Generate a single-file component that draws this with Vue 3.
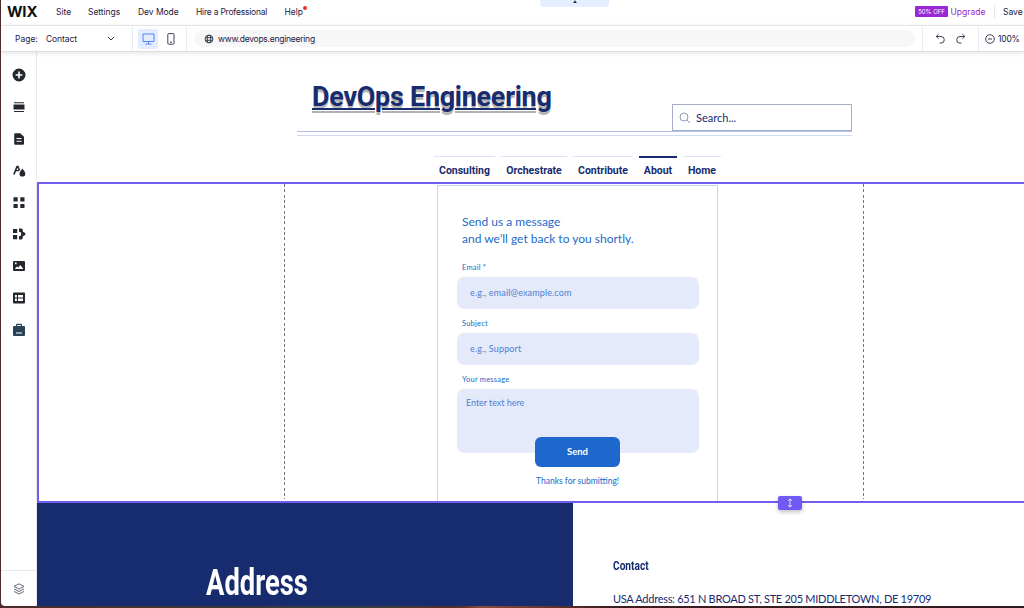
<template>
  <div class="desktop">
    <div class="window">
      <header class="menu-bar">
        <span class="brand">WIX</span>
        <nav class="menu">
          <a v-for="item in menu" :key="item.label" :class="item.key">{{ item.label }}</a>
        </nav>
        <div class="handle">
          <svg width="6" height="4" viewBox="0 0 6 4"><path d="M3 0.2 5 3H1z" /></svg>
        </div>
        <div class="plan">
          <span class="badge">50% OFF</span>
          <span class="upgrade">Upgrade</span>
        </div>
        <div class="save">Save</div>
      </header>

      <div class="tool-bar">
        <div class="page-select">
          <span class="page-label">Page:</span>
          <span class="page-name">Contact</span>
          <svg width="8" height="5" viewBox="0 0 8 5"><path d="M1 1l3 3 3-3" /></svg>
        </div>
        <div class="devices">
          <div class="device active">
            <svg width="13" height="12" viewBox="0 0 13 12">
              <path d="M1 1h11v7.5H1zM6.5 8.5v2.3M3.5 11h6" />
            </svg>
          </div>
          <div class="device">
            <svg width="8" height="12" viewBox="0 0 8 12">
              <rect x="0.8" y="0.6" width="6.2" height="10.6" rx="0.9" />
              <path d="M3 9.2h2" />
            </svg>
          </div>
        </div>
        <div class="address-wrap">
          <div class="address">
            <svg width="10" height="10" viewBox="0 0 10 10">
              <circle cx="5" cy="5" r="3.9" />
              <ellipse cx="5" cy="5" rx="1.8" ry="3.9" />
              <path d="M1.4 3.7h7.2M1.4 6.3h7.2" />
            </svg>
            <span>www.devops.engineering</span>
          </div>
        </div>
        <div class="history">
          <svg width="11" height="11" viewBox="0 0 11 11">
            <path d="M3.6 1.2 1.2 3.5l2.4 2.3M1.4 3.5H6a3.3 3.3 0 0 1 0 6.6H4.6" />
          </svg>
          <svg width="11" height="11" viewBox="0 0 11 11">
            <path d="M7.4 1.2l2.4 2.3-2.4 2.3M9.6 3.5H5a3.3 3.3 0 0 0 0 6.6h1.4" />
          </svg>
        </div>
        <div class="zoom">
          <svg width="10" height="10" viewBox="0 0 10 10">
            <circle cx="5" cy="5" r="4.3" />
            <path d="M3 5h4" />
          </svg>
          <span>100%</span>
        </div>
      </div>

      <div class="workspace">
        <aside class="side-bar">
          <div class="side-icons">
            <svg v-for="icon in sideIcons" :key="icon.name" :class="icon.name" width="14" height="14" viewBox="0 0 14 14">
              <path fill-rule="evenodd" :d="icon.path" />
            </svg>
          </div>
          <div class="layers">
            <svg width="12" height="12" viewBox="0 0 12 12">
              <path d="M6 .8 11 3.4 6 6 1 3.4zM1 5.9l5 2.6 5-2.6M1 8.4 6 11l5-2.6" />
            </svg>
          </div>
        </aside>

        <main class="canvas">
          <section class="site-header">
            <div class="title-row">
              <h1>DevOps Engineering</h1>
              <div class="search">
                <svg width="12" height="12" viewBox="0 0 12 12">
                  <circle cx="5" cy="5" r="4" />
                  <path d="M8 8l3 3" />
                </svg>
                <span>Search...</span>
              </div>
            </div>
            <div class="double-line"></div>
            <nav class="site-nav">
              <a v-for="link in links" :key="link.label" :class="[link.key, { current: link.current }]">
                {{ link.label }}
              </a>
            </nav>
          </section>

          <section class="selected">
            <div class="guide"></div>
            <form class="contact-form">
              <p class="intro">Send us a message<br />and we’ll get back to you shortly.</p>
              <label>Email *</label>
              <div class="field">e.g., email@example.com</div>
              <label>Subject</label>
              <div class="field">e.g., Support</div>
              <label>Your message</label>
              <div class="field area">Enter text here</div>
              <button type="button">Send</button>
              <p class="thanks">Thanks for submitting!</p>
            </form>
            <div class="guide"></div>
            <div class="resize">
              <svg width="8" height="10" viewBox="0 0 8 10">
                <path d="M4 1v8M2 2.8 4 .9l2 1.9M2 7.2l2 1.9 2-1.9" />
              </svg>
            </div>
          </section>

          <section class="site-footer">
            <div class="footer-left"><h2>Address</h2></div>
            <div class="footer-right">
              <h3>Contact</h3>
              <p>USA Address: 651 N BROAD ST, STE 205 MIDDLETOWN, DE 19709</p>
            </div>
          </section>
        </main>
      </div>
    </div>
  </div>
</template>

<script setup>
const menu = [
  { key: 'site', label: 'Site' },
  { key: 'settings', label: 'Settings' },
  { key: 'dev', label: 'Dev Mode' },
  { key: 'hire', label: 'Hire a Professional' },
  { key: 'help', label: 'Help' },
]

const links = [
  { key: 'consulting', label: 'Consulting' },
  { key: 'orchestrate', label: 'Orchestrate' },
  { key: 'contribute', label: 'Contribute' },
  { key: 'about', label: 'About', current: true },
  { key: 'home', label: 'Home' },
]

const sideIcons = [
  { name: 'add', path: 'M7 .5a6.5 6.5 0 1 1 0 13a6.5 6.5 0 0 1 0-13zM6.2 3.6v2.6H3.6v1.6h2.6v2.6h1.6V7.8h2.6V6.2H7.8V3.6z' },
  { name: 'sections', path: 'M1.5 4.6h11v5h-11zM2 2.3h10v1H2zM2 10.9h10v1H2z' },
  { name: 'pages', path: 'M3.2 1.2h5l3.8 3.6v7a1 1 0 0 1-1 1H3.2a1 1 0 0 1-1-1V2.200a1 1 0 0 1 1-1zM4.500 5.900v1h5v-1zM4.500 8.800v1h5v-1z' },
  { name: 'design', path: 'M1 10.500 4.500 1.800h2l1.500 3.900-1 1.600H4.100L2.800 10.500zM5.500 3.600 4.600 5.900h1.800zM10.400 4.400c1.500 2.200 2.900 3.700 2.900 5.300a2.900 2.900 0 0 1-5.800 0c0-1.600 1.400-3.100 2.900-5.300z' },
  { name: 'apps', path: 'M1.5 1.3h4.200v4.200H1.500zM8.300 1.300h4.200v4.200H8.300zM1.500 7.900h4.200v4.200H1.500zM8.300 7.900h4.200v4.200H8.300z' },
  { name: 'business', path: 'M1 1.900h4.200v4.200H1zM1 8h4.200v4.200H1zM7 1.500h2.600l1.200 1.100-.2 1.300.8 1.200 1.900.8v2.200l-1.900.8-.8 1.200.2 1.300-1.200 1.100H7V9.300a2.300 2.300 0 0 0 0-4.600z' },
  { name: 'media', path: 'M2 2h10a1 1 0 0 1 1 1v8a1 1 0 0 1-1 1H2a1 1 0 0 1-1-1V3a1 1 0 0 1 1-1zM2.800 10h8.600L8.300 6 6.200 8.500 4.900 7.500zM3 3.600v1.600h1.600V3.600z' },
  { name: 'content', path: 'M2 1.500h10a1 1 0 0 1 1 1v9a1 1 0 0 1-1 1H2a1 1 0 0 1-1-1v-9a1 1 0 0 1 1-1zM3 4v2.400h1.900V4zM6 4v2.400h5V4zM3 7.500v2.400h1.900V7.500zM6 7.500v2.400h5V7.500z' },
  { name: 'store', path: 'M4 3V1.800a1 1 0 0 1 1-1h4a1 1 0 0 1 1 1V3h2a1 1 0 0 1 1 1v8a1 1 0 0 1-1 1H2a1 1 0 0 1-1-1V4a1 1 0 0 1 1-1zM5.200 3h3.600V2H5.200zM4 9.500v1h6v-1z' },
]
</script>

<style>
body {
  overflow: hidden;
}
</style>

<style scoped>
* {
  box-sizing: border-box;
}

h1,
h2,
h3,
p {
  margin: 0;
}

svg {
  display: block;
  flex: none;
  fill: none;
  stroke: #3b4057;
}

.desktop {
  width: 1024px;
  height: 608px;
  padding: 0 0 2px 1px;
  background: linear-gradient(90deg, #4c2b2a, #35403f 35%, #5a2d28 45%, #8b4a3b 47%, #3b1c1e 60%, #2d1c20);
  font-family: Inter, "Open Sans", sans-serif;
  color: #1c2044;
}

.window {
  width: 1023px;
  height: 606px;
  display: flex;
  flex-direction: column;
  overflow: hidden;
  border-bottom-left-radius: 4px;
  background: #fff;
}

/* Top menu */
.menu-bar {
  position: relative;
  flex: none;
  display: flex;
  align-items: center;
  height: 26px;
  padding-bottom: 2px;
  border-bottom: 1px solid #ececec;
  font-size: 8.5px;
  line-height: 12px;
  white-space: nowrap;
}

.brand {
  width: 55px;
  padding-left: 6px;
  font-size: 15px;
  font-weight: 700;
  letter-spacing: -0.2px;
  color: #111;
}

.menu {
  display: flex;
  flex: 1;
}

.site {
  width: 32px;
}

.settings {
  width: 50px;
}

.dev {
  width: 58px;
}

.hire {
  width: 88.5px;
  letter-spacing: -0.22px;
}

.dev,
.settings {
  letter-spacing: -0.05px;
}

.hire {
  letter-spacing: -0.22px;
}

.help::after {
  content: "";
  position: absolute;
  top: 6px;
  left: 302px;
  width: 4px;
  height: 4px;
  border-radius: 50%;
  background: #ee3124;
}

.handle {
  position: absolute;
  top: 0;
  left: 539px;
  display: flex;
  justify-content: center;
  width: 69px;
  height: 7px;
  border-radius: 0 0 4px 4px;
  background: #e5eefe;
}

.handle svg {
  fill: #2b3153;
  stroke: none;
}

.plan {
  display: flex;
  align-items: center;
  width: 80px;
  height: 14px;
  border-right: 1px solid #e6e6ea;
}

.badge {
  width: 33px;
  height: 11px;
  margin-right: 3px;
  border-radius: 1px;
  background: #9a27d5;
  color: #fff;
  font-size: 6px;
  line-height: 11px;
  text-align: center;
}

.upgrade {
  margin-left: -0.5px;
  color: #9a27d5;
}

.save {
  width: 29px;
  padding-left: 8px;
}

/* Page and device bar */
.tool-bar {
  position: relative;
  z-index: 1;
  flex: none;
  display: flex;
  height: 26px;
  border-bottom: 1px solid #dedede;
  box-shadow: 0 1px 5px rgba(0, 0, 0, 0.12);
  background: #fff;
  font-size: 8.5px;
  line-height: 12px;
  white-space: nowrap;
}

.page-select {
  display: flex;
  align-items: center;
  width: 132px;
  padding-left: 14px;
  border-right: 1px solid #eaecf3;
}

.page-label {
  width: 31px;
}

.page-name {
  width: 61px;
  letter-spacing: -0.1px;
}

.devices {
  display: flex;
  align-items: center;
  width: 54px;
  padding-left: 5px;
  border-right: 1px solid #eaecf3;
}

.device {
  display: flex;
  align-items: center;
  justify-content: center;
  width: 20px;
  height: 20px;
}

.device + .device {
  margin-left: 3px;
}

.device.active {
  border-radius: 2px;
  background: #e3edff;
}

.device.active svg {
  stroke: #4d86f0;
}

.address-wrap {
  display: flex;
  align-items: center;
  width: 736px;
  padding-left: 7px;
  border-right: 1px solid #eaecf3;
}

.address {
  display: flex;
  align-items: center;
  gap: 4px;
  width: 721px;
  height: 17px;
  padding-left: 10px;
  border-radius: 9px;
  background: #f7f7f7;
  letter-spacing: -0.25px;
}

.history {
  display: flex;
  align-items: center;
  gap: 9px;
  width: 56px;
  padding-left: 12px;
  border-right: 1px solid #eaecf3;
}

.zoom {
  display: flex;
  align-items: center;
  gap: 3px;
  padding-left: 6px;
  letter-spacing: -0.2px;
}

.workspace {
  flex: 1;
  display: flex;
  min-height: 0;
}

.side-bar {
  display: flex;
  flex-direction: column;
  justify-content: space-between;
  width: 36px;
  border-right: 1px solid #e8e8e8;
}

.side-icons {
  display: flex;
  flex-direction: column;
  align-items: center;
  gap: 17.9px;
  padding-top: 16px;
}

.side-icons svg {
  fill: #24282e;
  stroke: none;
}

.side-icons .store {
  fill: #2b4256;
}

.layers {
  display: flex;
  align-items: center;
  justify-content: center;
  height: 36px;
  border-top: 1px solid #e5e8f3;
}

.layers svg {
  stroke-width: 0.8;
}

/* Site being edited */
.canvas {
  flex: 1;
  display: flex;
  flex-direction: column;
  color: #172b6f;
}

.site-header {
  height: 130px;
  padding-left: 260px;
}

.title-row {
  display: flex;
  justify-content: space-between;
  width: 555px;
  height: 79px;
}

h1 {
  height: 32px;
  margin: 29px 0 0 15px;
  font: bold 27px/32px Roboto, sans-serif;
  letter-spacing: -0.29px;
  text-decoration: underline;
  text-decoration-thickness: 2px;
  text-underline-offset: 2px;
  text-shadow: 0 3px 0 rgba(0, 0, 0, 0.3);
  white-space: nowrap;
}

.search {
  display: flex;
  align-items: center;
  gap: 5px;
  width: 180px;
  height: 27px;
  margin-top: 52px;
  padding-left: 6px;
  border: 1px solid #a6aecb;
  font: 11px/14px Lato, sans-serif;
}

.search span {
  padding-top: 1px;
}

.search svg {
  stroke: #8e98bd;
}

.double-line {
  width: 555px;
  height: 5px;
  border-top: 1px solid #b3c1ea;
  border-bottom: 1px solid #d0daf5;
}

.site-nav {
  display: flex;
  gap: 6px;
  margin: 19px 0 0 137px;
  padding-top: 1px;
  font: bold 10.5px/15px Roboto, sans-serif;
  white-space: nowrap;
}

.site-nav a {
  padding-top: 6px;
  border-top: 1px solid #dbe4f9;
  text-align: center;
}

.site-nav .current {
  padding-top: 5px;
  border-top: 2px solid #172b6f;
}

.consulting {
  width: 61px;
}

.orchestrate {
  width: 66px;
}

.contribute {
  width: 60px;
}

.about,
.home {
  width: 38px;
}

.selected {
  position: relative;
  display: flex;
  height: 321px;
  border: 2px solid #705df2;
  border-right: none;
}

.guide {
  width: 1px;
  height: 315px;
  background: repeating-linear-gradient(#777 0 3px, transparent 3px 5.33px);
}

.guide:first-child {
  margin-left: 245px;
}

.contact-form {
  display: flex;
  flex-direction: column;
  width: 281px;
  height: 316px;
  margin: 1px 145px 0 152px;
  padding: 28px 18px 0 19px;
  border: 1px solid #c3d4f7;
  border-bottom: none;
  color: #2469ca;
  font-family: Lato, sans-serif;
  white-space: nowrap;
}

.intro {
  padding-left: 5px;
  font-size: 12px;
  line-height: 16.5px;
}

label {
  height: 10px;
  margin: 16px 0 4px 5px;
  font-size: 7.5px;
  line-height: 10px;
  letter-spacing: 0.2px;
}

.field {
  flex: none;
  width: 242px;
  height: 32px;
  padding-left: 13px;
  border-radius: 7px;
  background: #e4eafa;
  color: #4b82d3;
  font-size: 9px;
  line-height: 32px;
  letter-spacing: 0.14px;
}

.field + label {
  margin-top: 10px;
}

.area {
  height: 64px;
  padding-left: 9px;
  line-height: 27px;
  letter-spacing: -0.05px;
}

button {
  flex: none;
  width: 85px;
  height: 30px;
  margin: -16px 0 0 78px;
  padding: 0;
  border: none;
  border-radius: 6px;
  background: #1e67cd;
  color: #fff;
  font: bold 9.5px/30px Lato, sans-serif;
}

.thanks {
  margin: 8px 0 0 79px;
  font-size: 8.5px;
  line-height: 12px;
}

.resize {
  position: absolute;
  left: 739px;
  bottom: -9px;
  display: flex;
  align-items: center;
  justify-content: center;
  width: 24px;
  height: 14px;
  border-radius: 2px;
  background: #7059f5;
  box-shadow: 0 2px 4px rgba(0, 0, 0, 0.25);
}

.resize svg {
  stroke: #fff;
  stroke-width: 0.8;
}

.site-footer {
  flex: 1;
  display: flex;
}

.footer-left {
  width: 536px;
  padding: 60px 0 0 169px;
  background: #172b6f;
  color: #fff;
}

h2 {
  font: bold 36px/40px Roboto, sans-serif;
  transform: scaleX(0.76);
  transform-origin: left;
  white-space: nowrap;
}

.footer-right {
  padding: 55px 0 0 40px;
  white-space: nowrap;
}

h3 {
  font: bold 13px/16px Roboto, sans-serif;
  transform: scaleX(0.78);
  transform-origin: left;
}

.footer-right p {
  margin-top: 18px;
  font: 11px/14px Lato, sans-serif;
  letter-spacing: -0.28px;
}
</style>
